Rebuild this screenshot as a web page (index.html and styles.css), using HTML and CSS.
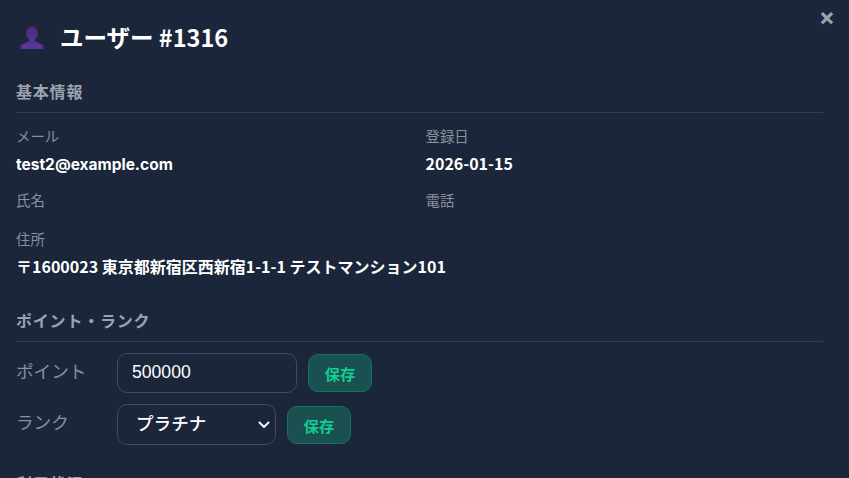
FILE: index.html
```html
<!DOCTYPE html>
<html lang="ja">
<head>
  <meta charset="UTF-8" />
  <meta name="viewport" content="width=device-width, initial-scale=1.0" />
  <title>ユーザー #1316</title>
  <link rel="stylesheet" href="styles.css">
</head>
<body>
  <div class="modal">
    <button class="close-btn">×</button>
    <h2 class="modal-title">
      <svg class="user-icon" viewBox="0 0 24 24" aria-hidden="true">
        <defs>
          <linearGradient id="userFill" x1="0" y1="0" x2="0" y2="1">
            <stop offset="0" stop-color="#472c7c"/>
            <stop offset="1" stop-color="#5d349f"/>
          </linearGradient>
        </defs>
        <path fill="url(#userFill)" d="M12 .5c-3.400 0-5.500 2.400-5.500 5.800 0 .6 0 1-.1 1.300-.3.200-.4.600-.3 1.100.1.600.4 1 .7 1.100.4 1.500 1.200 2.700 2.100 3.500v2.100c-2.800 1.100-6.600 1.900-7.700 4.100-.5 1-.7 2-.7 3.500h23c0-1.500-.2-2.500-.7-3.500-1.100-2.200-4.900-3-7.700-4.100v-2.100c.9-.8 1.700-2 2.100-3.500.3-.1.600-.5.700-1.100.1-.5 0-.9-.3-1.100-.1-.3-.1-.7-.1-1.300C17.500 2.900 15.400.5 12 .5z"/>
      </svg>
      <span>ユーザー #1316</span>
    </h2>

    <section class="section">
      <h3 class="section-title">基本情報</h3>
      <div class="info-grid">
        <div class="info-item">
          <div class="info-label">メール</div>
          <div class="info-value email">test2@example.com</div>
        </div>
        <div class="info-item">
          <div class="info-label">登録日</div>
          <div class="info-value">2026-01-15</div>
        </div>
        <div class="info-item">
          <div class="info-label">氏名</div>
        </div>
        <div class="info-item">
          <div class="info-label">電話</div>
        </div>
        <div class="info-item wide">
          <div class="info-label">住所</div>
          <div class="info-value">〒1600023 東京都新宿区西新宿1-1-1 テストマンション101</div>
        </div>
      </div>
    </section>

    <section class="section">
      <h3 class="section-title">ポイント・ランク</h3>
      <div class="form-row">
        <label class="form-label">ポイント</label>
        <input class="form-input" type="text" value="500000">
        <button class="save-btn">保存</button>
      </div>
      <div class="form-row">
        <label class="form-label">ランク</label>
        <select class="form-select">
          <option>プラチナ</option>
        </select>
        <button class="save-btn">保存</button>
      </div>
    </section>

    <section class="section">
      <h3 class="section-title">利用状況</h3>
    </section>
  </div>
</body>
</html>
```

FILE: styles.css
```css
html, body { height: 100%; }
body {
  margin: 0;
  background: #1b263b;
  color: #fff;
  font-family: "Noto Sans CJK JP", sans-serif;
  line-height: 1.6;
  overflow: hidden;
}
.modal { position: relative; padding: 19px 26px 0 16px; height: 100%; box-sizing: border-box; overflow: hidden; }
.close-btn {
  position: absolute;
  top: 2px;
  right: 14px;
  padding: 0;
  border: none;
  background: none;
  color: #9ca3af;
  font-family: Inter, sans-serif;
  font-size: 24px;
  font-weight: 700;
  line-height: 30px;
}
.modal-title {
  display: flex;
  align-items: center;
  gap: 16px;
  margin: 0 0 22px 4px;
  font-size: 23.5px;
  font-weight: 700;
}
.user-icon { width: 24px; height: 24px; flex: none; }
.section { margin-bottom: 26px; }
.section-title {
  margin: 0 0 11px;
  padding-bottom: 8px;
  border-bottom: 1px solid #323c50;
  color: #9ca3af;
  font-size: 16px;
  font-weight: 700;
  letter-spacing: 0.8px;
}
.info-grid { display: grid; grid-template-columns: 1fr 1fr; gap: 12px; padding-bottom: 3px; }
.info-item.wide { grid-column: 1 / -1; }
.info-label { margin-bottom: 4px; color: #8a909c; font-size: 14.4px; }
.info-value { font-size: 16px; font-weight: 700; line-height: 24.6px; }
.info-value.email { padding-top: 4px; font-family: Inter, sans-serif; font-size: 15.5px; line-height: 20.6px; }
.form-row { display: flex; align-items: center; gap: 11px; margin-bottom: 11px; }
.form-row:last-child { margin-bottom: 1px; }
.form-label { width: 90px; padding-bottom: 5px; color: #8a909c; font-size: 17.6px; }
.form-input, .form-select {
  box-sizing: border-box;
  border: 1px solid #434b5c;
  border-radius: 10px;
  background-color: #1b263b;
  color: #fff;
  font-size: 17.6px;
}
.form-input { width: 180px; height: 40px; padding: 0 14px 2px; font-family: "Liberation Sans", sans-serif; }
.form-select {
  width: 159px;
  height: 41px;
  padding: 0 14px 5px 18px;
  appearance: none;
  background-image: url("data:image/svg+xml,%3Csvg xmlns='http://www.w3.org/2000/svg' viewBox='0 0 12 8'%3E%3Cpath d='M1.500 1.500 6 6l4.500-4.500' fill='none' stroke='%23fff' stroke-width='2' stroke-linecap='round' stroke-linejoin='round'/%3E%3C/svg%3E");
  background-repeat: no-repeat;
  background-position: right 5px center;
  background-size: 12px 8px;
  font-family: inherit;
  font-weight: 500;
}
.save-btn {
  box-sizing: border-box;
  width: 64px;
  height: 38px;
  border: 1px solid #0f7464;
  border-radius: 10px;
  background: #1a504f;
  color: #10cf92;
  font-family: inherit;
  font-size: 15.2px;
  font-weight: 700;
}
```
